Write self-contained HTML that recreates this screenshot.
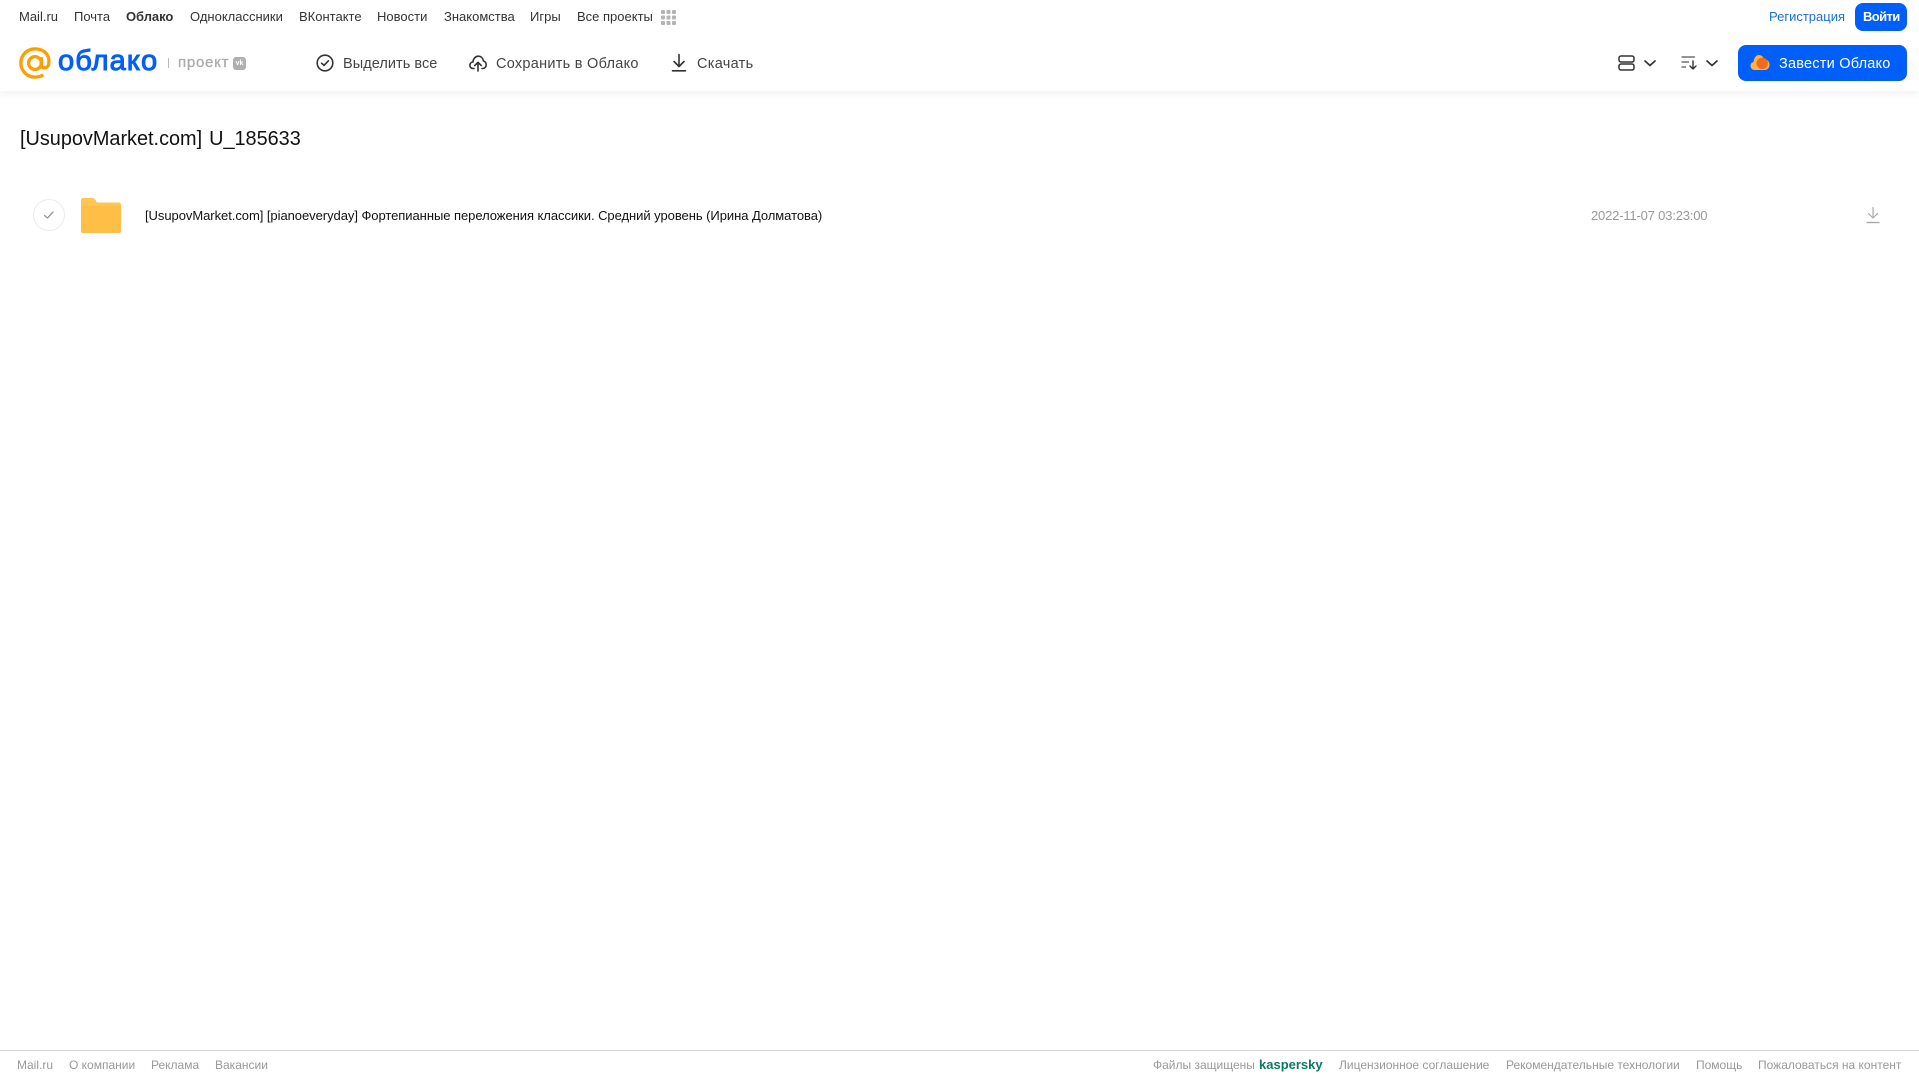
<!DOCTYPE html>
<html lang="ru"><head><meta charset="utf-8"><title>Облако</title>
<style>
html,body{margin:0;padding:0;background:#fff;width:1919px;height:1079px;overflow:hidden}
body{font-family:"Liberation Sans",Arial,sans-serif;position:relative}
.t{position:absolute;white-space:nowrap;line-height:16px}
.n{top:9px;font-size:13px;color:#333}
.a{top:56px;font-size:14.5px;color:#444}
.f{top:1057px;font-size:12px;color:#999}
svg{position:absolute;overflow:visible}
.hdr{position:absolute;left:0;top:0;width:1919px;height:91px;background:#fff;box-shadow:0 2px 8px rgba(0,0,0,.07)}
</style></head><body>
<div class="hdr"></div>

<span class="t n" style="left:19px">Mail.ru</span>
<span class="t n" style="left:74px">Почта</span>
<span class="t n" style="left:126px;font-weight:700;letter-spacing:-.05px">Облако</span>
<span class="t n" style="left:190px">Одноклассники</span>
<span class="t n" style="left:299px">ВКонтакте</span>
<span class="t n" style="left:377px">Новости</span>
<span class="t n" style="left:444px">Знакомства</span>
<span class="t n" style="left:530px">Игры</span>
<span class="t n" style="left:577px">Все проекты</span>
<svg style="left:661px;top:10px" width="15" height="15"><g fill="#b4b4b4"><rect x="0" y="0" width="4" height="4" rx="1"/><rect x="5.500" y="0" width="4" height="4" rx="1"/><rect x="11" y="0" width="4" height="4" rx="1"/><rect x="0" y="5.500" width="4" height="4" rx="1"/><rect x="5.500" y="5.500" width="4" height="4" rx="1"/><rect x="11" y="5.500" width="4" height="4" rx="1"/><rect x="0" y="11" width="4" height="4" rx="1"/><rect x="5.500" y="11" width="4" height="4" rx="1"/><rect x="11" y="11" width="4" height="4" rx="1"/></g></svg>

<span class="t n" style="left:1769px;color:#1a6fd8">Регистрация</span>
<div style="position:absolute;left:1855px;top:3px;width:52px;height:28px;border-radius:8px;background:#005ff9"></div>
<span class="t n" style="left:1863px;color:#fff;font-weight:700;letter-spacing:-.6px">Войти</span>

<svg style="left:19px;top:47px" width="32" height="32" viewBox="0 0 33 33"><circle cx="16.500" cy="16.500" r="6.600" fill="none" stroke="#ff9e00" stroke-width="3.400"/><path d="M23.100 10.500V18.600C23.100 22.600 29.600 22.600 30.600 17.600C32.300 7.600 25.300 1.900 16.500 1.900C8.400 1.900 1.900 8.400 1.900 16.500S8.400 31.100 16.500 31.100C19.800 31.100 22.600 30.200 25 28.600" fill="none" stroke="#ff9e00" stroke-width="3.400"/></svg>
<span class="t" style="left:58px;top:45px;font-size:29px;line-height:32px;font-weight:400;color:#005ff9;letter-spacing:1.1px;-webkit-text-stroke:1px #005ff9">облако</span>
<div style="position:absolute;left:168px;top:58px;width:1px;height:10px;background:#bbb"></div>
<span class="t" style="left:178px;top:55px;font-size:15px;color:#ababab;letter-spacing:.75px;-webkit-text-stroke:.3px #ababab">проект</span>
<div style="position:absolute;left:233px;top:57px;width:13px;height:13px;border-radius:3px;background:#b0b0b0;color:#fff;font:700 7px/13px 'Liberation Sans',sans-serif;text-align:center">vk</div>

<svg style="left:316px;top:54px" width="18" height="18" viewBox="0 0 18 18"><circle cx="9" cy="9" r="7.800" fill="none" stroke="#333" stroke-width="1.600"/><path d="M5.600 9.200L8 11.400L12.400 6.800" fill="none" stroke="#333" stroke-width="1.600" stroke-linecap="round" stroke-linejoin="round"/></svg>
<span class="t a" style="left:343px;letter-spacing:.05px">Выделить все</span>
<svg style="left:469px;top:54px" width="18" height="18" viewBox="0 0 18 18"><path d="M5 14.500H4C2 14.500 .9 13 .9 11.300C.9 9.500 2.200 8.200 3.900 8C4.300 4.500 6.500 2.200 9.300 2.200C12 2.200 14 4.200 14.500 7C16.200 7.400 17.200 9 17.200 10.700C17.200 12.800 15.800 14.500 13.800 14.500H13" fill="none" stroke="#333" stroke-width="1.600" stroke-linecap="round"/><path d="M9 17V8.500M5.800 11.500L9 8.300L12.200 11.500" fill="none" stroke="#333" stroke-width="1.600" stroke-linecap="round" stroke-linejoin="round"/></svg>
<span class="t a" style="left:496px;letter-spacing:.27px">Сохранить в Облако</span>
<svg style="left:672px;top:54px" width="14" height="18" viewBox="0 0 14 18"><path d="M7 .5V12M2 7.500L7 12.500L12 7.500" fill="none" stroke="#333" stroke-width="1.600" stroke-linecap="round" stroke-linejoin="round"/><path d="M.5 16.800H13.500" stroke="#333" stroke-width="1.600" stroke-linecap="round"/></svg>
<span class="t a" style="left:697px;letter-spacing:.3px">Скачать</span>

<svg style="left:1618px;top:55px" width="17" height="16" viewBox="0 0 17 16"><rect x="1" y="1" width="15" height="6" rx="2" fill="none" stroke="#333" stroke-width="1.500"/><rect x="1" y="9" width="15" height="6" rx="2" fill="none" stroke="#333" stroke-width="1.500"/></svg>
<svg style="left:1644px;top:60px" width="12" height="7" viewBox="0 0 12 7"><path d="M1 1L6 5.500L11 1" fill="none" stroke="#333" stroke-width="1.700" stroke-linecap="round" stroke-linejoin="round"/></svg>
<svg style="left:1681px;top:56px" width="17" height="14" viewBox="0 0 17 14"><path d="M.5 1H14M.5 6H8M.5 11H5" stroke="#555" stroke-width="1.200" fill="none"/><path d="M12 5V13M9 10L12 13L15 10" stroke="#333" stroke-width="1.400" fill="none" stroke-linecap="round" stroke-linejoin="round"/></svg>
<svg style="left:1706px;top:60px" width="12" height="7" viewBox="0 0 12 7"><path d="M1 1L6 5.500L11 1" fill="none" stroke="#333" stroke-width="1.700" stroke-linecap="round" stroke-linejoin="round"/></svg>

<div style="position:absolute;left:1738px;top:45px;width:169px;height:36px;border-radius:8px;background:#005ff9"></div>
<svg style="left:1750px;top:54px" width="20" height="17" viewBox="0 0 20 17"><path d="M4.500 16C2 16 .5 14 .5 11.800C.5 9.800 1.800 8.400 3.500 8C3.900 4 6.200 1 9 1C11.500 1 13.200 2.800 14 5C17 5.200 19.500 7.500 19.500 10.700C19.500 14 17.200 16 14.500 16Z" fill="#ffb23e"/><circle cx="12.200" cy="9.300" r="5.700" fill="#f26a21"/></svg>
<span class="t" style="left:1779px;top:56px;font-size:14.500px;color:#fff;letter-spacing:.22px">Завести Облако</span>

<span class="t" style="left:20px;top:127px;font-size:20px;line-height:24px;color:#111;word-spacing:1.500px;transform-origin:0 0;transform:scaleX(.993)">[UsupovMarket.com] U_185633</span>

<div style="position:absolute;left:33px;top:199px;width:30px;height:30px;border:1px solid #ececec;border-radius:50%"></div>
<svg style="left:43px;top:210px" width="12" height="10" viewBox="0 0 12 10"><path d="M1.500 5.500L4.500 8L10 2" fill="none" stroke="#999" stroke-width="1.300" stroke-linecap="round" stroke-linejoin="round"/></svg>
<svg style="left:81px;top:198px" width="40" height="35" viewBox="0 0 40 35"><path d="M2 0H11C13 0 14.500 1 15 3C15.300 4 15.800 4.500 17 4.500H38C39.200 4.500 40 5.300 40 6.500V33C40 34.200 39.200 35 38 35H2C.8 35 0 34.200 0 33V2C0 .8.800 0 2 0Z" fill="#ffc653"/><path d="M0 9.500C0 8.400.8 7.500 2 7.500H38C39.200 7.500 40 8.400 40 9.500V33C40 34.200 39.200 35 38 35H2C.8 35 0 34.200 0 33Z" fill="#ffbe45"/></svg>

<span class="t" style="left:145px;top:208px;font-size:13px;color:#111;letter-spacing:-.05px">[UsupovMarket.com] [pianoeveryday] Фортепианные переложения классики. Средний уровень (Ирина Долматова)</span>
<span class="t" style="left:1591px;top:208px;font-size:13px;color:#999;letter-spacing:-.18px">2022-11-07 03:23:00</span>
<svg style="left:1866px;top:207px" width="14" height="17" viewBox="0 0 14 17"><path d="M7 .5V11M2.500 6.500L7 11L11.500 6.500" fill="none" stroke="#aaa" stroke-width="1.200" stroke-linecap="round" stroke-linejoin="round"/><path d="M.5 15.500H13.500" stroke="#aaa" stroke-width="1.400"/></svg>

<div style="position:absolute;left:0;top:1050px;width:1919px;height:1px;background:#d8d8d8"></div>
<span class="t f" style="left:17px">Mail.ru</span>
<span class="t f" style="left:69px">О компании</span>
<span class="t f" style="left:151px">Реклама</span>
<span class="t f" style="left:215px">Вакансии</span>
<span class="t f" style="left:1153px">Файлы защищены</span>
<span class="t f" style="left:1259px;color:#0b7a63;font-weight:700;font-size:13px">kaspersky</span>
<span class="t f" style="left:1339px">Лицензионное соглашение</span>
<span class="t f" style="left:1506px">Рекомендательные технологии</span>
<span class="t f" style="left:1696px">Помощь</span>
<span class="t f" style="left:1758px">Пожаловаться на контент</span>
</body></html>
